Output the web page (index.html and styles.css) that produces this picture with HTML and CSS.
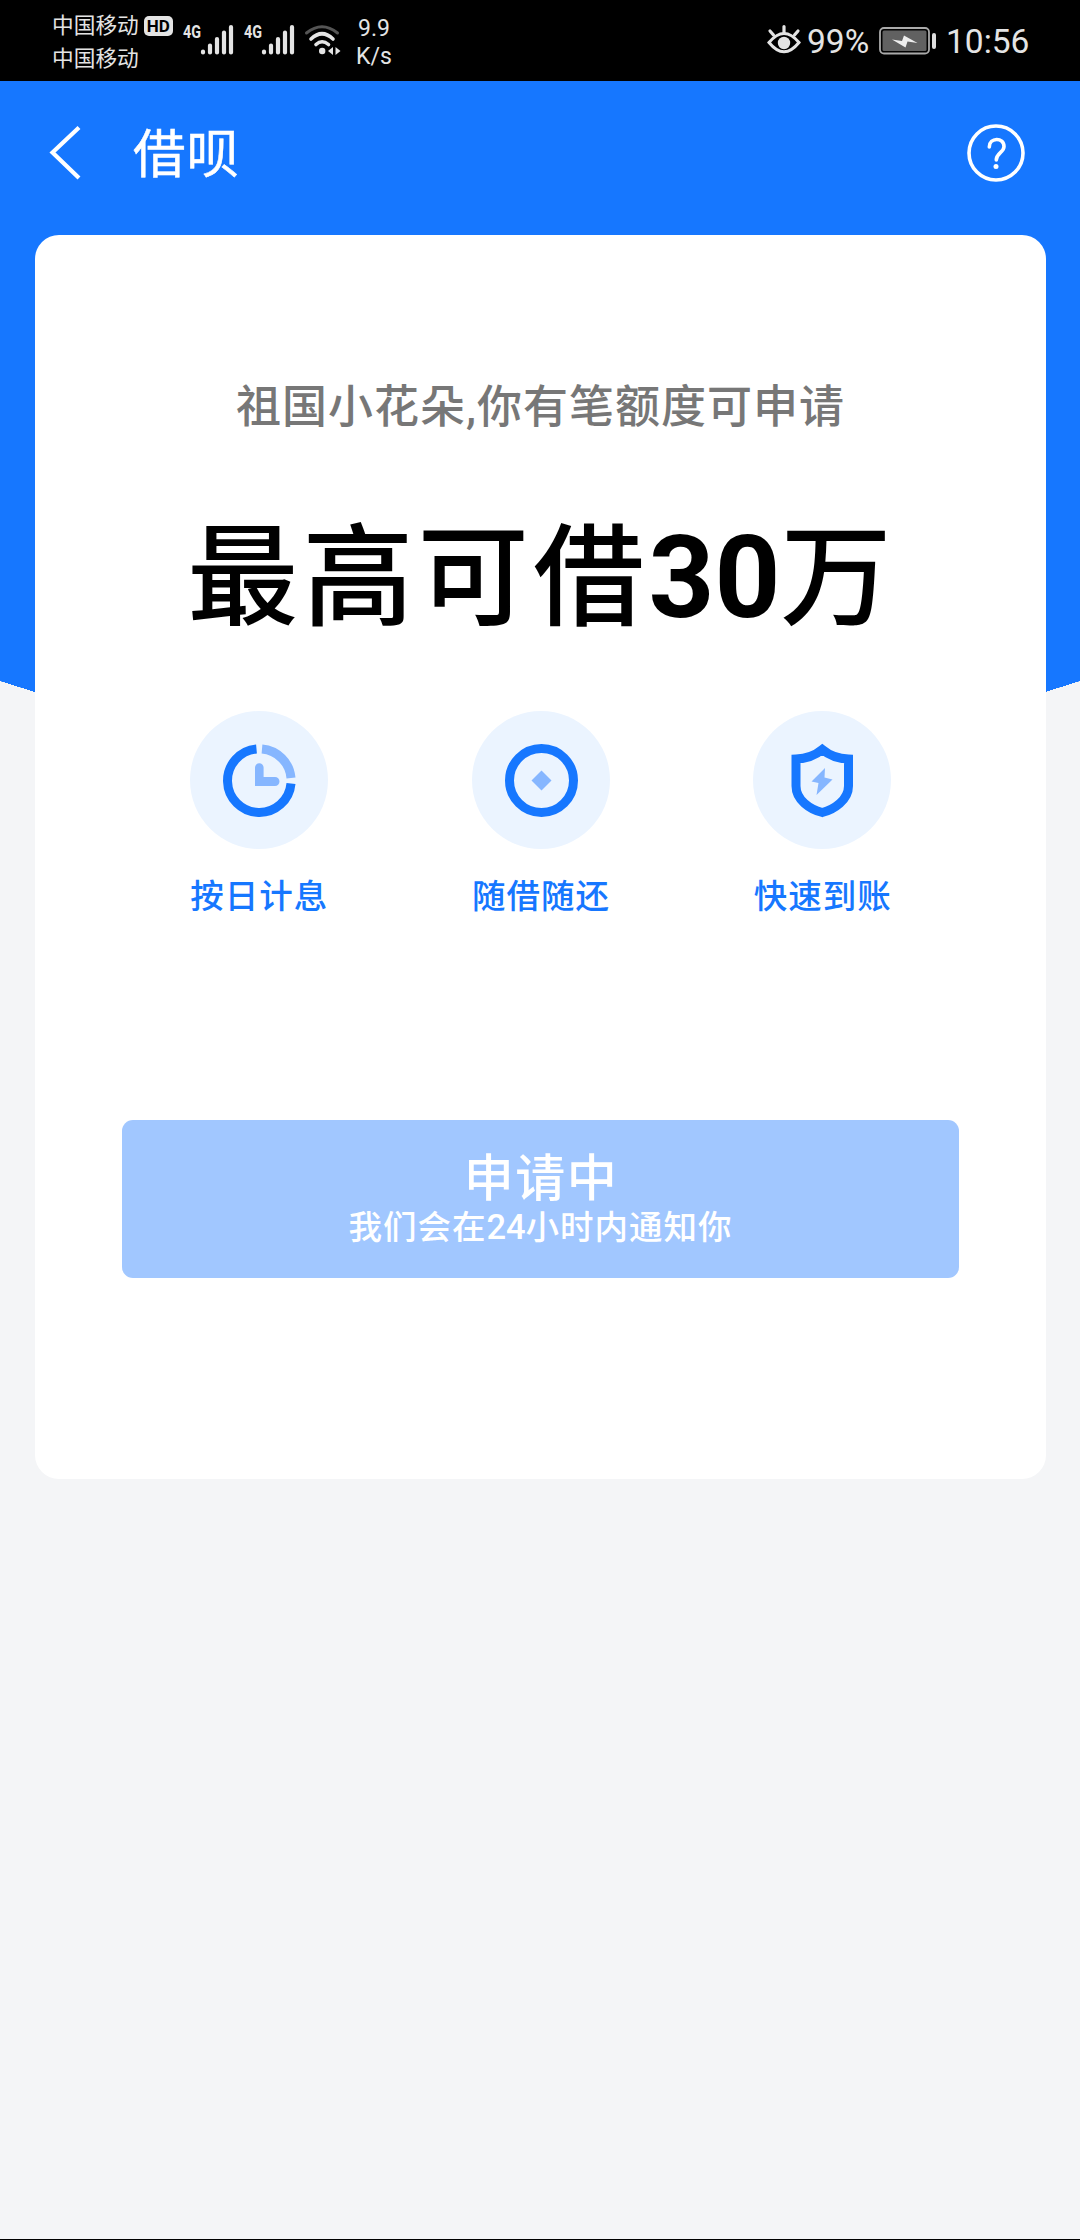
FILE: index.html
```html
<!DOCTYPE html>
<html lang="zh-CN">
<head>
<meta charset="utf-8">
<title>借呗</title>
<link rel="stylesheet" href="styles.css">
</head>
<body>
<div class="status-bar">
  <div class="carriers">
    <div class="carrier"><span>中国移动</span><span class="hd">HD</span></div>
    <div class="carrier"><span>中国移动</span></div>
  </div>
  <svg class="signal" viewBox="0 0 52 34"><text x="0" y="14" textLength="18" lengthAdjust="spacingAndGlyphs" class="net-text">4G</text><path d="M20 27.500v1M27 21.500v7M34 15v13.500M41 8.500v20M48 3v25.500" class="bars"/></svg>
  <svg class="signal second" viewBox="0 0 52 34"><text x="0" y="14" textLength="18" lengthAdjust="spacingAndGlyphs" class="net-text">4G</text><path d="M20 27.500v1M27 21.500v7M34 15v13.500M41 8.500v20M48 3v25.500" class="bars"/></svg>
  <svg class="wifi" viewBox="0 0 38 30">
    <g fill="none" stroke-linecap="round">
      <path d="M2.500 8Q18 -4.500 33.500 8" stroke="#555" stroke-width="3"/>
      <path d="M7 14Q18 3.500 29 14M12 19.500Q18 14 24.500 19.500" stroke="#e4e4e4" stroke-width="3.600"/>
    </g>
    <circle cx="18.200" cy="26" r="3.200" fill="#e4e4e4"/>
    <path d="M24 26l5-4v8zM31.500 22v8l5-4z" fill="#e4e4e4"/>
  </svg>
  <div class="speed"><span>9.9</span><span>K/s</span></div>
  <svg class="eye" viewBox="0 0 34 30">
    <path d="M2 17.500Q17 -.5 32 17.500Q17 36 2 17.500Z" fill="none" stroke="#e4e4e4" stroke-width="3"/>
    <circle cx="17" cy="18" r="6.200" fill="#e4e4e4"/>
    <path d="M17 1.500v6M3 6l3.500 4M31 6l-3.500 4" stroke="#e4e4e4" stroke-width="3.200" stroke-linecap="round"/>
  </svg>
  <span class="percent">99%</span>
  <svg class="battery" viewBox="0 0 58 28">
    <rect x="1" y="1" width="49" height="25.500" rx="4" fill="#000" stroke="#aaa" stroke-width="1.800"/>
    <rect x="3.500" y="3.500" width="44" height="20.500" rx="1.500" fill="#616161"/>
    <path d="M13 12.500l10 1.500 2-5.500 13.500 7.500-10-1.500-2 6z" fill="#eee"/>
    <rect x="53" y="6" width="4" height="16" rx="2" fill="#ddd"/>
  </svg>
  <span class="clock">10:56</span>
</div>
<main class="page">
  <header class="nav">
    <svg class="back" viewBox="0 0 32 54"><path d="M30 1.500L3.500 26.500L30 52" fill="none" stroke="#fff" stroke-width="4.200"/></svg>
    <h1 class="nav-title">借呗</h1>
    <svg class="help" viewBox="0 0 58 58"><circle cx="29" cy="29" r="27" fill="none" stroke="#fff" stroke-width="3.600"/><path d="M22.300 23C22.300 13 37 13 37 22.500C37 28.500 29.300 29 29.300 36" fill="none" stroke="#fff" stroke-width="3.600" stroke-linecap="round"/><circle cx="29" cy="42.500" r="2.500" fill="#fff"/></svg>
  </header>
  <section class="card">
    <p class="greeting">祖国小花朵,你有笔额度可申请</p>
    <p class="headline">最高可借<b>30</b>万</p>
    <ul class="features">
      <li class="feature">
        <svg class="feature-icon" viewBox="0 0 138 138"><circle cx="69" cy="69" r="69" fill="#ebf4ff"/>
          <g fill="none" stroke-width="9"><path d="M66.500 38A31.800 31.800 0 1 0 101 72.500" stroke="#1677ff"/><path d="M72 38A31.800 31.800 0 0 1 101 67" stroke="#86b6ff"/></g>
          <path d="M65 56.500a4.300 4.300 0 0 1 8.600 0V66H85a4.500 4.500 0 0 1 0 9H65z" fill="#86b6ff"/></svg>
        <span>按日计息</span>
      </li>
      <li class="feature">
        <svg class="feature-icon" viewBox="0 0 138 138"><circle cx="69" cy="69" r="69" fill="#ebf4ff"/>
          <circle cx="69.500" cy="69.500" r="32" fill="none" stroke="#1677ff" stroke-width="9"/><path d="M69.500 59.500l10 10-10 10-10-10z" fill="#86b6ff"/></svg>
        <span>随借随还</span>
      </li>
      <li class="feature">
        <svg class="feature-icon" viewBox="0 0 138 138"><circle cx="69" cy="69" r="69" fill="#ebf4ff"/>
          <path d="M69.300 38.500Q80 47.500 95.500 48V75C95.500 89 81 98.500 69.300 101.500C57 98.500 43 89 43 75V48Q58.500 47.500 69.300 38.500Z" fill="none" stroke="#1677ff" stroke-width="9"/>
          <path d="M72 57L58.500 70.500l7 1.500L63.500 84 79.500 68.500l-8-2z" fill="#86b6ff"/></svg>
        <span>快速到账</span>
      </li>
    </ul>
    <button class="apply"><span class="apply-title">申请中</span><span class="apply-note">我们会在<b>24</b>小时内通知你</span></button>
  </section>
</main>
</body>
</html>
```
FILE: styles.css
```css
* { box-sizing: border-box; margin: 0; padding: 0; }
body {
  width: 1080px;
  height: 2240px;
  background: #f4f5f7;
  border-bottom: 1px solid #000;
  font-family: Roboto, "Noto Sans CJK SC", sans-serif;
  overflow: hidden;
}
svg { display: block; flex: none; overflow: visible; }

.status-bar {
  display: flex;
  align-items: flex-start;
  height: 81px;
  padding-left: 52px;
  background: #000;
  color: #e4e4e4;
}
.carriers { width: 131px; padding-top: 9px; }
.carrier { display: flex; align-items: center; gap: 5px; height: 33px; font-size: 21.700px; line-height: 33px; white-space: nowrap; }
.hd {
  width: 29px;
  height: 20px;
  border-radius: 5px;
  background: #e4e4e4;
  color: #000;
  font-size: 17px;
  font-weight: 700;
  line-height: 20px;
  text-align: center;
}
.net-text { font: 700 18px Roboto, sans-serif; fill: #e4e4e4; }
.signal { width: 52px; height: 34px; margin-top: 24px; }
.signal.second { margin-left: 9px; }
.bars { fill: none; stroke: #e4e4e4; stroke-width: 4.200; stroke-linecap: round; }
.wifi { width: 38px; height: 30px; margin: 25px 0 0 8px; }
.speed { display: flex; flex-direction: column; align-items: center; width: 60px; margin-left: 2px; padding-top: 15px; font-size: 23px; line-height: 27.500px; }
.eye { width: 34px; height: 30px; margin: 25px 0 0 363px; }
.percent { width: 63px; margin-left: 6px; padding-top: 22px; font-size: 33.500px; line-height: 40px; }
.battery { width: 58px; height: 28px; margin: 27px 0 0 9px; }
.clock { margin-left: 9px; padding-top: 22px; font-size: 33.500px; line-height: 40px; }

.page {
  height: 2158px;
  padding: 0 34px 0 35px;
  background: linear-gradient(#1677ff, #1677ff) no-repeat 0 0 / 100% 600px, linear-gradient(197.500deg, #1677ff 50%, transparent 50.500%) no-repeat 0 600px / 35px 11px, linear-gradient(162.500deg, #1677ff 50%, transparent 50.500%) no-repeat 100% 600px / 35px 11px;
}
.nav { display: flex; align-items: center; height: 154px; padding: 0 21px 10px 14px; }
.back { width: 32px; height: 54px; }
.nav-title { margin-left: 52px; padding-top: 4px; color: #fff; font-size: 52.500px; font-weight: 400; line-height: 60px; letter-spacing: 1px; -webkit-text-stroke: .5px #fff; }
.help { width: 58px; height: 58px; margin-left: auto; }

.card {
  display: flex;
  flex-direction: column;
  align-items: center;
  height: 1244px;
  padding-top: 143px;
  border-radius: 24px;
  background: #fff;
}
.greeting { color: #777; font-size: 45px; font-weight: 500; line-height: 60px; letter-spacing: 1px; white-space: nowrap; }
.headline { margin-top: 71px; padding-left: 2px; color: #000; font-size: 111px; font-weight: 500; line-height: 140px; letter-spacing: 4.300px; white-space: nowrap; }
.headline b { font-size: 115px; font-weight: 700; line-height: 1; letter-spacing: 0; }
.features { display: flex; justify-content: space-between; width: 702.500px; margin-top: 62px; list-style: none; }
.feature { display: flex; flex-direction: column; align-items: center; gap: 27px; color: #1677ff; font-size: 33.500px; font-weight: 500; line-height: 42px; letter-spacing: 1px; }
.feature-icon { width: 138px; height: 138px; }
.feature span { padding-left: 1px; }
.apply {
  display: flex;
  flex-direction: column;
  align-items: center;
  width: 837px;
  height: 158px;
  margin-top: 202px;
  padding-top: 31px;
  border: 0;
  border-radius: 11px;
  background: #a1c7ff;
  color: #fff;
  font-family: inherit;
}
.apply-title { padding-left: 1px; font-size: 50px; font-weight: 500; line-height: 56px; letter-spacing: 1.500px; }
.apply-note { font-size: 33.500px; font-weight: 500; line-height: 42px; letter-spacing: 1px; }
.apply-note b { font-size: 34.500px; font-weight: 500; line-height: 1; letter-spacing: 0; }
```
